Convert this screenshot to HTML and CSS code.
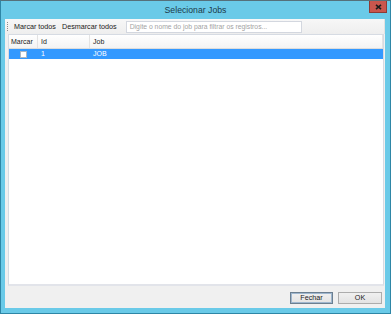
FILE: index.html
```html
<!DOCTYPE html>
<html lang="pt">
<head>
<meta charset="utf-8">
<title>Selecionar Jobs</title>
<link rel="stylesheet" href="styles.css">
</head>
<body>
<div class="window">
  <div class="titlebar">
    <span></span>
    <span class="title">Selecionar Jobs</span>
    <span class="close-wrap">
      <span class="close">
        <svg width="7" height="6" viewBox="0 0 7 6"><path d="M1 0.8 L6 5.2 M6 0.8 L1 5.2" stroke="#1b1b1b" stroke-width="1.6"/></svg>
      </span>
    </span>
  </div>
  <div class="client">
    <div class="toolbar">
      <span class="grip"></span>
      <span class="tb-btn">Marcar todos</span>
      <span class="tb-btn">Desmarcar todos</span>
      <span class="filter">Digite o nome do job para filtrar os registros...</span>
    </div>
    <div class="grid">
      <div class="row head">
        <span class="cell c-mark">Marcar</span>
        <span class="cell c-id">Id</span>
        <span class="cell c-job">Job</span>
      </div>
      <div class="row selected">
        <span class="cell c-mark center"><span class="check"></span></span>
        <span class="cell c-id">1</span>
        <span class="cell c-job">JOB</span>
      </div>
    </div>
    <div class="footer">
      <span class="btn default">Fechar</span>
      <span class="btn">OK</span>
    </div>
  </div>
</div>
</body>
</html>
```
FILE: styles.css
```css
html, body {
  margin: 0;
  padding: 0;
}
body {
  width: 391px;
  height: 314px;
  overflow: hidden;
  font-family: "Liberation Sans", Arial, sans-serif;
  background: #6acae8;
}
.window {
  box-sizing: border-box;
  width: 391px;
  height: 314px;
  border: 1px solid #2e86a6;
  border-top-color: #55707a;
  background: #6acae8;
  display: flex;
  flex-direction: column;
  padding: 0 4px 5px 4px;
}
.titlebar {
  height: 18px;
  flex: none;
  display: grid;
  grid-template-columns: 1fr auto 1fr;
  align-items: start;
}
.title {
  font-size: 8.7px;
  color: #1d3a4a;
  line-height: 18px;
}
.close-wrap {
  display: flex;
  justify-content: flex-end;
  margin-right: -1px;
}
.close {
  width: 18px;
  height: 12px;
  box-sizing: border-box;
  background: #c9564d;
  border: 1px solid #8e3b35;
  border-top: none;
  display: flex;
  align-items: center;
  justify-content: center;
}
.client {
  flex: 1;
  background: #f0f0f0;
  display: flex;
  flex-direction: column;
  margin-right: 1px;
}
.toolbar {
  height: 15px;
  flex: none;
  display: flex;
  align-items: center;
  font-size: 7.2px;
  color: #1a1a1a;
  background: linear-gradient(#f7f7f7, #eeeeee);
  border-right: 1px solid #e2e2e2;
}
.grip {
  width: 1px;
  height: 10px;
  margin-left: 2px;
  margin-right: 3px;
  background: repeating-linear-gradient(#8c8c8c 0 1px, transparent 1px 2px);
}
.tb-btn {
  padding: 0 3px;
  white-space: nowrap;
}
.filter {
  margin-left: 6px;
  width: 176px;
  height: 12px;
  box-sizing: border-box;
  background: #fff;
  border: 1px solid #d3d7df;
  color: #a3a3a3;
  font-size: 6.8px;
  line-height: 10px;
  padding-left: 3px;
  white-space: nowrap;
  overflow: hidden;
}
.grid {
  flex: 1;
  margin: 0 1px 0 3px;
  background: #fff;
  border: 1px solid #d6dbe3;
  border-bottom: 2px solid #e2e4ea;
  font-size: 7px;
}
.row {
  display: grid;
  grid-template-columns: 29px 52px 1fr;
}
.head {
  height: 14px;
  box-sizing: border-box;
  background: linear-gradient(#ffffff, #f3f3f3);
  border-bottom: 1px solid #dcdcdc;
  color: #1a1a1a;
}
.head .cell {
  border-right: 1px solid #e3e3e3;
  line-height: 13px;
}
.head .c-mark {
  padding-left: 2px;
}
.cell {
  padding-left: 3px;
  white-space: nowrap;
  overflow: hidden;
}
.selected {
  height: 10px;
  background: #3399ff;
  color: #fff;
  line-height: 10px;
}
.center {
  display: flex;
  align-items: center;
  justify-content: center;
  padding-left: 0;
}
.check {
  width: 7px;
  height: 7px;
  box-sizing: border-box;
  background: #fff;
  border: 1px solid #a9b6c4;
}
.footer {
  height: 22px;
  flex: none;
  display: flex;
  justify-content: flex-end;
  align-items: flex-start;
  gap: 5px;
  padding: 6px 3px 0 0;
  box-sizing: border-box;
}
.btn {
  width: 44px;
  height: 12px;
  box-sizing: border-box;
  border: 1px solid #acacac;
  background: linear-gradient(#f0f0f0, #e3e3e3);
  font-size: 7.2px;
  line-height: 10px;
  text-align: center;
  color: #1a1a1a;
}
.btn.default {
  border-color: #6c7f90;
  box-shadow: inset 0 0 0 1px #9fb7cf;
  width: 43px;
}
```
